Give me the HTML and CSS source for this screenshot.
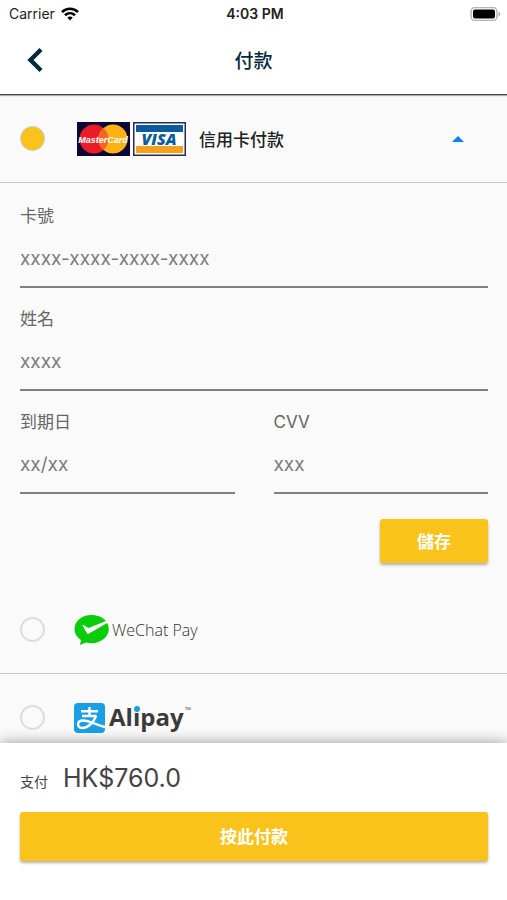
FILE: index.html
```html
<!DOCTYPE html>
<html lang="zh-HK">
<head>
  <meta charset="UTF-8" />
  <meta name="viewport" content="width=device-width, initial-scale=1.0" />
  <title>付款</title>
  <link rel="stylesheet" href="styles.css">
</head>
<body>
  <div class="status-bar">
    <div class="carrier">
      <span>Carrier</span>
      <svg width="18" height="14" viewBox="0 0 18 14" fill="none" stroke="#000" stroke-width="2.6">
        <path d="M1 5.1C5.5 .6 12.500 .6 17 5.100" />
        <path d="M4 8.300C6.900 5.500 11.100 5.500 14 8.300" />
        <path d="M6.300 10.600C7.900 9.200 10.100 9.200 11.700 10.600L9 13.500Z" fill="#000" stroke="none" />
      </svg>
    </div>
    <div class="time">4:03 PM</div>
    <div class="battery">
      <svg width="31" height="14" viewBox="0 0 31 14">
        <rect x="1" y=".5" width="26" height="13" rx="4" fill="#fff" stroke="#b5b5b5" stroke-width="1.500" />
        <rect x="3" y="2.500" width="22" height="9" rx="2" fill="#000" />
        <path d="M28.500 4.500C31 5.500 31 8.500 28.500 9.500Z" fill="#b5b5b5" />
      </svg>
    </div>
  </div>
  <header class="toolbar">
    <button class="back" type="button" aria-label="返回">
      <svg width="18" height="26" viewBox="0 0 18 26" fill="none" stroke="#06293d" stroke-width="4.400">
        <path d="M15 2.500L4.500 13L15 23.500" />
      </svg>
    </button>
    <h1>付款</h1>
  </header>

  <main>
    <label class="method">
      <input type="radio" name="method" checked>
      <span class="cards">
        <svg width="53" height="34" viewBox="0 0 53 34">
          <rect width="53" height="34" fill="#0b0638" />
          <circle cx="17" cy="17" r="14.500" fill="#eb1c26" />
          <circle cx="36" cy="17" r="14.500" fill="#fcb116" />
          <path d="M26.500 6A14.500 14.500 0 0 1 26.500 28A14.500 14.500 0 0 1 26.500 6Z" fill="#f26522" />
          <text class="mc-text" x="26" y="21" text-anchor="middle">MasterCard</text>
        </svg>
        <svg width="53" height="34" viewBox="0 0 53 34">
          <rect x=".75" y=".75" width="51.500" height="32.500" fill="#fff" stroke="#2a2a55" stroke-width="1.500" />
          <rect x="3" y="3" width="47" height="7" fill="#0c5ba0" />
          <rect x="3" y="24" width="47" height="7" fill="#f9a01b" />
          <text class="visa-text" x="26" y="23" text-anchor="middle">VISA</text>
        </svg>
      </span>
      <span class="method-name">信用卡付款</span>
      <svg class="caret" width="12" height="6" viewBox="0 0 12 6"><path d="M0 6L6 0L12 6Z" fill="#0a7cff" /></svg>
    </label>

    <form class="card-form">
      <div class="field">
        <label for="card-no">卡號</label>
        <input id="card-no" type="text" placeholder="xxxx-xxxx-xxxx-xxxx">
      </div>
      <div class="field">
        <label for="card-name">姓名</label>
        <input id="card-name" type="text" placeholder="xxxx">
      </div>
      <div class="field-row">
        <div class="field">
          <label for="expiry">到期日</label>
          <input id="expiry" type="text" placeholder="xx/xx">
        </div>
        <div class="field">
          <label for="cvv">CVV</label>
          <input id="cvv" type="text" placeholder="xxx">
        </div>
      </div>
      <button class="btn save" type="button">儲存</button>
    </form>

    <label class="method">
      <input type="radio" name="method">
      <span class="logo">
        <svg width="36" height="32" viewBox="0 0 36 32">
          <path d="M17.500 1C8 1 .5 7 .5 15C.5 19.500 3 23.500 7 26L6 31L12 28.500C14 29 15.500 29.200 17.500 29.200C27 29.200 34.800 23 34.800 15C34.800 12.500 34 10.500 33 9L15 19.500C14 20 13.300 19.800 12.800 18.900L8.500 11.500C8.300 10.700 9 10.500 9.600 10.900L13.500 13.600C14.300 14 15 14 15.800 13.600L32 7C28.800 3.300 23.500 1 17.500 1Z" fill="#09cd0b" />
        </svg>
        <span class="wechat-text">WeChat Pay</span>
      </span>
    </label>

    <label class="method">
      <input type="radio" name="method">
      <span class="logo">
        <svg width="124" height="40" viewBox="0 -4 124 40">
          <rect x="0" y="1" width="31" height="30" rx="4" fill="#1a9fe5" />
          <g fill="none" stroke="#fff" stroke-width="2.400">
            <path d="M7 9.200H24M15.500 5V14M8 14H22.500" />
            <path d="M22 14C20 20 14 26 8.500 26C2.500 26 2.500 18.500 9 18.500C15 18.500 22 22.500 31 25" />
          </g>
          <text class="alipay-text" x="35" y="24">Alipay</text>
          <circle class="i-dot" cx="63" cy="7" r="3" />
          <text class="tm" x="111" y="11">™</text>
        </svg>
      </span>
    </label>
  </main>

  <footer class="pay-bar">
    <div class="total">
      <span class="total-label">支付</span>
      <span class="amount">HK$760.0</span>
    </div>
    <button class="btn pay" type="button">按此付款</button>
  </footer>
</body>
</html>
```
FILE: styles.css
```css
* {
  box-sizing: border-box;
}
body {
  margin: 0;
  height: 100vh;
  display: flex;
  flex-direction: column;
  overflow: hidden;
  background-color: #fafafa;
  color: #222;
  font-family: Inter, "Noto Sans CJK TC", sans-serif;
}
button {
  font-family: inherit;
  border: none;
  cursor: pointer;
}
.status-bar {
  display: grid;
  grid-template-columns: 1fr auto 1fr;
  align-items: center;
  height: 27px;
  padding: 0 6px 0 9px;
  background-color: #fff;
  font-size: 14px;
}
.carrier {
  display: flex;
  align-items: center;
  gap: 6px;
}
.time {
  font-weight: 600;
}
.battery {
  display: flex;
  justify-content: flex-end;
}
.toolbar {
  display: grid;
  grid-template-columns: 72px 1fr 72px;
  align-items: center;
  height: 68px;
  padding-bottom: 2px;
  background-color: #fff;
  border-bottom: 1px solid #444;
  box-shadow: 0 1px 1px rgba(0, 0, 0, 0.3);
}
.back {
  display: flex;
  padding: 0 0 0 26px;
  background: none;
}
h1 {
  margin: 0;
  text-align: center;
  font-size: 19px;
  font-weight: 500;
  color: #06293d;
}
main {
  flex: 1;
  min-height: 0;
  overflow: hidden;
}
.method {
  display: flex;
  align-items: center;
  height: 88px;
  padding: 0 43px 0 20px;
  border-bottom: 1px solid #ccc;
}
.method input {
  appearance: none;
  width: 25px;
  height: 25px;
  margin: 0;
  border: 2px solid #ddd;
  border-radius: 50%;
}
.method input:checked {
  border: 1px solid #ccc;
  background-color: #f9c31b;
}
.cards {
  display: flex;
  gap: 3px;
  margin-left: 32px;
}
.mc-text {
  font: italic bold 9px "Liberation Sans", sans-serif;
  fill: #fff;
}
.visa-text {
  font: italic 800 16px "Open Sans", sans-serif;
  fill: #0c5ba0;
}
.method-name {
  margin-left: 13px;
  font-size: 17px;
  font-weight: 500;
}
.caret {
  margin-left: auto;
}
.card-form {
  display: flex;
  flex-direction: column;
  padding: 20px 19px 23px 20px;
}
.field {
  display: flex;
  flex-direction: column;
  height: 103px;
}
.field label {
  height: 26px;
  line-height: 26px;
  font-size: 17px;
  color: #666;
}
.field input {
  width: 100%;
  height: 59px;
  padding: 2px 0 0;
  border: none;
  border-bottom: 2px solid #808080;
  background: none;
  font-family: inherit;
  font-size: 19px;
  color: #333;
  outline: none;
}
.field input::placeholder {
  color: #7c7c7c;
}
.field-row {
  display: grid;
  grid-template-columns: 1fr 1fr;
  gap: 39px;
}
.btn {
  padding: 0 0 2px;
  border-radius: 3px;
  background-color: #f9c31b;
  box-shadow: 0 2px 3px rgba(0, 0, 0, 0.3);
  color: #fff;
  font-size: 17px;
  font-weight: 700;
}
.save {
  align-self: flex-end;
  width: 108px;
  height: 44px;
  margin-top: 7px;
}
.logo {
  display: flex;
  align-items: center;
  gap: 2px;
  margin-left: 29px;
}
.wechat-text {
  font-family: "Open Sans", sans-serif;
  font-size: 16px;
  font-weight: 300;
  color: #333;
}
.alipay-text {
  font: bold 24px "Open Sans", sans-serif;
  fill: #3c3a3a;
}
.i-dot {
  fill: #1a9fe5;
}
.tm {
  font: 8px "Open Sans", sans-serif;
  fill: #555;
}
.pay-bar {
  position: relative;
  display: flex;
  flex-direction: column;
  padding: 16px 19px 39px 20px;
  background-color: #fff;
  box-shadow: 0 -2px 12px rgba(0, 0, 0, 0.3);
}
.total {
  display: flex;
  align-items: baseline;
  gap: 15px;
  height: 53px;
  line-height: 38px;
  color: #444;
}
.total-label {
  font-size: 14px;
}
.amount {
  font-size: 25px;
}
.pay {
  height: 49px;
}
```
